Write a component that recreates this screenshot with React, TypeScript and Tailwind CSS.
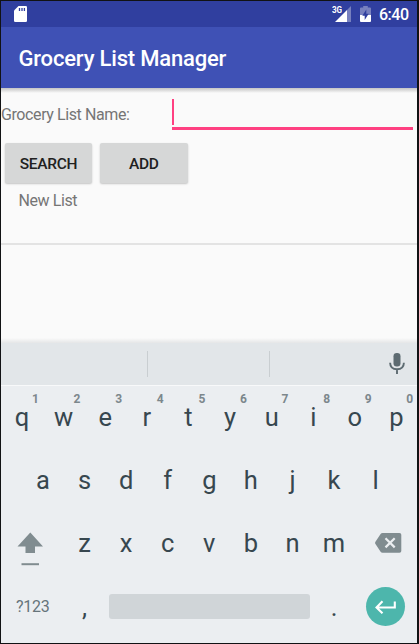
import React from "react";

const topKeys = ["q", "w", "e", "r", "t", "y", "u", "i", "o", "p"];
const homeKeys = ["a", "s", "d", "f", "g", "h", "j", "k", "l"];
const bottomKeys = ["z", "x", "c", "v", "b", "n", "m"];

function StatusBar() {
  return (
    <div className="flex h-[26px] shrink-0 items-start bg-[#303f9f] pl-[13px] pr-[9px] text-white">
      <svg className="mt-[5px]" width="13" height="16" viewBox="0 0 13 16">
        <path d="M4.5 0H11.7Q13 0 13 1.3V14.7Q13 16 11.7 16H1.3Q0 16 0 14.7V4.6Z" fill="#fff" />
        <path d="M5.500 2v3M8 2v3M10.400 2v3" stroke="#303f9f" strokeWidth="1.3" />
      </svg>
      <div className="ml-auto flex items-start">
        <span className="mt-[4px] block w-[3px] origin-left scale-x-90 text-[9px] font-bold leading-[10px] tracking-[-0.3px]">3G</span>
        <svg className="mt-[5px]" width="16" height="16" viewBox="0 0 16 16">
          <path d="M16 0V16H12V4Z" fill="#7780be" />
          <path d="M12 4V16H0Z" fill="#fff" />
        </svg>
        <svg className="ml-[9px] mt-[5px]" width="11" height="16" viewBox="0 0 11 16">
          <path d="M3.2 0h4.6v1.6H10q1 0 1 1V9H0V2.6q0-1 1-1h2.200z" fill="#7780be" />
          <path d="M0 9h11v6q0 1-1 1H1q-1 0-1-1z" fill="#fff" />
          <path d="M6.300 3.400V7.700H8.700L4.700 14V9.800H2.300Z" fill="#303f9f" />
        </svg>
        <span className="ml-[8px] block w-[29px] whitespace-nowrap text-[16px] font-medium leading-[27px] tracking-[-0.5px]">6:40</span>
      </div>
    </div>
  );
}

function Key({ label, hint }: { label: string; hint?: string }) {
  return (
    <div className="relative flex w-[41.6px] shrink-0 items-center justify-center pl-[0.6px] text-[25.5px] leading-[30px] text-[#37474f]">
      {label}
      {hint && (
        <span className="absolute left-[31px] top-[6px] text-[12px] font-bold leading-[14px] text-[#7c878c]">
          {hint}
        </span>
      )}
    </div>
  );
}

function Keyboard() {
  return (
    <div className="flex h-[300px] shrink-0 flex-col bg-[#ebeef1]">
      <div className="flex h-[42px] shrink-0 items-center bg-[#e2e6e9] pr-[12px]">
        <div className="ml-[146px] h-[26px] w-px bg-[#c9ced1]" />
        <div className="ml-[121px] h-[26px] w-px bg-[#c9ced1]" />
        <svg className="-mt-px ml-auto" width="16" height="21" viewBox="0 0 16 21">
          <rect x="4.500" y="0" width="7" height="13.500" rx="3.300" fill="#5d6b71" />
          <path d="M1.100 9.700Q1.300 16.200 8 16.200T14.900 9.700M8 16v5" fill="none" stroke="#5d6b71" strokeWidth="1.900" />
        </svg>
      </div>
      <div className="h-px shrink-0 bg-[#f8f9fa]" />
      <div className="flex h-[61px] shrink-0">
        {topKeys.map((k, i) => (
          <Key key={k} label={k} hint={String((i + 1) % 10)} />
        ))}
      </div>
      <div className="flex h-[64px] shrink-0 justify-center pt-[2px]">
        {homeKeys.map((k) => (
          <Key key={k} label={k} />
        ))}
      </div>
      <div className="flex h-[63px] shrink-0">
        <div className="flex w-[62.4px] shrink-0 items-center pl-[16px]">
          <svg className="mt-[13px]" width="27" height="34" viewBox="0 0 27 34">
            <path d="M13.300 0.500L26 14.500H18V21H8.500V14.500H0.500Z" fill="#808c90" />
            <path d="M4.500 32.200H22" stroke="#808c90" strokeWidth="2" />
          </svg>
        </div>
        {bottomKeys.map((k) => (
          <Key key={k} label={k} />
        ))}
        <div className="flex flex-1 items-center pl-[20px]">
          <svg width="27" height="20" viewBox="0 0 27 20">
            <path d="M7.500 0H24.500Q26.300 0 26.300 1.800V18Q26.300 19.800 24.500 19.800H7.500Q6.300 19.800 5.600 18.700L0.300 10.800Q-0.100 9.900 0.300 9L5.600 1.100Q6.300 0 7.500 0Z" fill="#808c90" />
            <path d="M10.500 5.200L19.700 14.400M19.700 5.200L10.500 14.400" stroke="#ebeef1" strokeWidth="2.200" />
          </svg>
        </div>
      </div>
      <div className="flex h-[65px] shrink-0 items-center">
        <span className="w-[62.4px] shrink-0 pl-px pt-px text-center text-[16px] tracking-[-0.3px] text-[#66747a]">?123</span>
        <Key label="," />
        <div className="ml-[4px] h-[25px] w-[201px] shrink-0 rounded-[3px] bg-[#d0d5d8]" />
        <div className="ml-[3px]">
          <Key label="." />
        </div>
        <div className="ml-auto mr-[12.500px] flex size-[39px] shrink-0 items-center justify-center rounded-full bg-[#4db6ac]">
          <svg width="21" height="14" viewBox="0 0 21 14">
            <path d="M19.800 1.500V7.500H1.500M7.500 1.200L1.500 7.500L7.500 13.300" fill="none" stroke="#fff" strokeWidth="2.100" />
          </svg>
        </div>
      </div>
    </div>
  );
}

export default function App() {
  return (
    <div className="h-[644px] w-[419px] bg-[#111214] pb-px pl-px pr-[2px] pt-px font-['Roboto','Liberation_Sans',sans-serif]">
      <div className="flex h-[642px] w-[416px] flex-col overflow-hidden bg-[#fafafa]">
        <StatusBar />
        <header className="flex h-[61px] shrink-0 items-center bg-[#3f51b5] pl-[17.500px] pt-[2px] text-[22px] font-medium tracking-[-0.18px] text-white">
          Grocery List Manager
        </header>
        <div className="h-[5px] shrink-0 bg-linear-to-b from-[#c4c4c4] to-[#fafafa]" />
        <main className="flex flex-1 flex-col text-[#757575]">
          <div className="flex h-[37px] shrink-0 items-start">
            <label className="w-[170.500px] pt-[12px] text-[16px] leading-[20px] tracking-[-0.4px]">Grocery List Name:</label>
            <div className="mt-[5.500px] flex h-[31.200px] w-[241.500px] flex-col justify-between">
              <div className="h-[26.500px] w-[2px] bg-[#ff4081]" />
              <div className="h-[2.500px] bg-[#ff4081]" />
            </div>
          </div>
          <div className="mt-[13px] flex gap-[8px] pl-[4px] text-[15.500px] font-medium tracking-[-0.3px] text-[#212121]">
            <button className="h-[40px] w-[87px] rounded-[2px] bg-[#d6d7d7] pt-[3px] shadow-[0_1px_2px_rgba(0,0,0,0.22)]">SEARCH</button>
            <button className="h-[40px] w-[87.500px] rounded-[2px] bg-[#d6d7d7] pt-[3px] shadow-[0_1px_2px_rgba(0,0,0,0.22)]">ADD</button>
          </div>
          <div className="mt-[7px] h-[55px] border-b-2 border-[#e3e3e3] pl-[17.500px] pt-px text-[16px] leading-[20px] tracking-[-0.4px]">New List</div>
        </main>
        <div className="h-[5px] shrink-0 bg-linear-to-b from-[#fafafa] to-[#e5e6e7]" />
        <Keyboard />
      </div>
    </div>
  );
}
